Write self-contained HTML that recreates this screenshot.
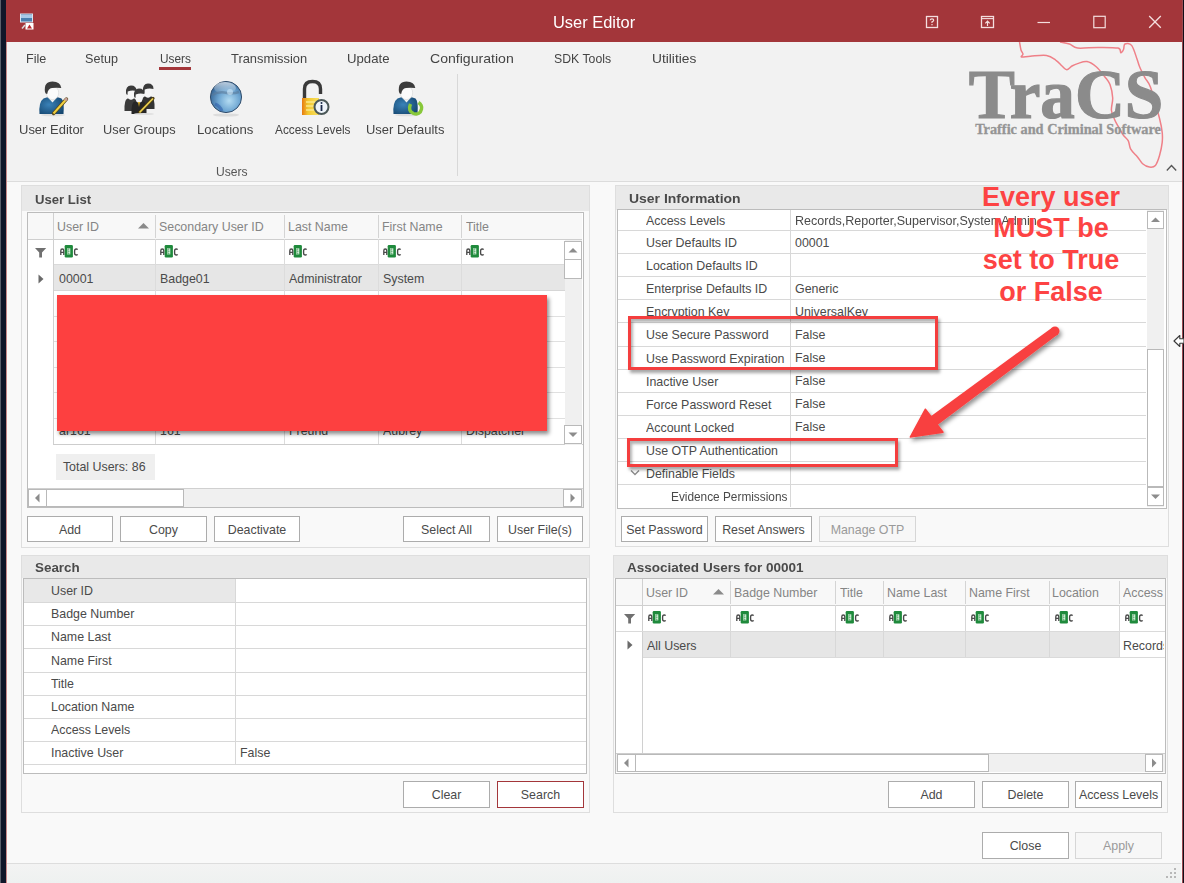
<!DOCTYPE html><html><head><meta charset="utf-8"><style>
html,body{margin:0;padding:0;}
body{width:1184px;height:883px;position:relative;overflow:hidden;background:#f9f9f9;font-family:"Liberation Sans",sans-serif;font-size:12.4px;color:#4a4a4a;}
div,svg{position:absolute;box-sizing:content-box;}
.t{white-space:nowrap;overflow:hidden;}
</style></head><body>
<div style="left:0px;top:0px;width:6px;height:883px;background:#0f1629"></div>
<div style="left:0px;top:0px;width:1px;height:883px;background:#5a5f6a"></div>
<div style="left:6px;top:0px;width:1px;height:883px;background:#c98a8a"></div>
<div style="left:1182px;top:0px;width:2px;height:883px;background:#120d18"></div>
<div style="left:1182px;top:0px;width:1px;height:883px;background:#9c4a50"></div>
<div style="left:6px;top:0px;width:1176px;height:42px;background:#a3363a"></div>
<svg style="left:19px;top:13px" width="18" height="18" viewBox="0 0 18 18"><rect x="1.5" y="1" width="12" height="8" fill="#4a7fae" stroke="#d9e6f2" stroke-width="1"/><rect x="2" y="2" width="11" height="3" fill="#a9c9e6"/><rect x="6.5" y="10" width="8" height="6.5" fill="#fff"/><path d="M8 15.5L10.5 11.5L13 15.5Z" fill="#b8282e"/><path d="M3 15.5L6 12" stroke="#ddd" stroke-width="1.5"/></svg>
<div class="t" style="left:552.7px;top:1.5px;width:82.0px;height:42px;line-height:42px;font-size:16px;transform:scaleX(1.0259);transform-origin:0 0;color:#fff;">User Editor</div>
<svg style="left:925px;top:15px" width="14" height="14" viewBox="0 0 14 14"><rect x="1.5" y="1.5" width="11" height="11" fill="none" stroke="#f4dede" stroke-width="1.3"/><path d="M5.2 5.2Q5.3 3.8 7 3.8Q8.7 3.8 8.7 5.2Q8.7 6.3 7 6.8V8" stroke="#f4dede" stroke-width="1.2" fill="none"/><rect x="6.4" y="9" width="1.2" height="1.3" fill="#f4dede"/></svg>
<svg style="left:980px;top:15px" width="16" height="14" viewBox="0 0 16 14"><rect x="1.5" y="1.5" width="12" height="11" fill="none" stroke="#f4dede" stroke-width="1.3"/><path d="M1.5 3.6H13.5" stroke="#f4dede" stroke-width="1.1"/><path d="M7.5 11V6.5M5.3 8.4L7.5 6.2L9.7 8.4" stroke="#f4dede" stroke-width="1.2" fill="none"/></svg>
<svg style="left:1036px;top:15px" width="16" height="14" viewBox="0 0 16 14"><path d="M1.5 7.5H14" stroke="#f4dede" stroke-width="1.2"/></svg>
<svg style="left:1092px;top:15px" width="16" height="14" viewBox="0 0 16 14"><rect x="1.8" y="1.3" width="11.4" height="11.4" fill="none" stroke="#f4dede" stroke-width="1.2"/></svg>
<svg style="left:1148px;top:15px" width="16" height="14" viewBox="0 0 16 14"><path d="M1.2 1L12.8 12.8M12.8 1L1.2 12.8" stroke="#f4dede" stroke-width="1.3"/></svg>
<div style="left:7px;top:42px;width:1175px;height:139px;background:#f2f2f2"></div>
<div style="left:7px;top:181px;width:1175px;height:1px;background:#dcdcdc"></div>
<div class="t" style="left:25.5px;top:48.5px;width:22.3px;height:20px;line-height:20px;font-size:12.6px;transform:scaleX(0.9998);transform-origin:0 0;color:#444;">File</div>
<div class="t" style="left:85.2px;top:48.5px;width:34.9px;height:20px;line-height:20px;font-size:12.6px;transform:scaleX(0.9991);transform-origin:0 0;color:#444;">Setup</div>
<div class="t" style="left:159.5px;top:48.5px;width:34.9px;height:20px;line-height:20px;font-size:12.6px;transform:scaleX(0.9391);transform-origin:0 0;color:#444;">Users</div>
<div class="t" style="left:230.7px;top:48.5px;width:76.5px;height:20px;line-height:20px;font-size:12.6px;transform:scaleX(1.0221);transform-origin:0 0;color:#444;">Transmission</div>
<div class="t" style="left:347px;top:48.5px;width:42.6px;height:20px;line-height:20px;font-size:12.6px;transform:scaleX(1.0460);transform-origin:0 0;color:#444;">Update</div>
<div class="t" style="left:430.4px;top:48.5px;width:77.0px;height:20px;line-height:20px;font-size:12.6px;transform:scaleX(1.1181);transform-origin:0 0;color:#444;">Configuration</div>
<div class="t" style="left:554.4px;top:48.5px;width:60.6px;height:20px;line-height:20px;font-size:12.6px;transform:scaleX(0.9745);transform-origin:0 0;color:#444;">SDK Tools</div>
<div class="t" style="left:651.7px;top:48.5px;width:42.6px;height:20px;line-height:20px;font-size:12.6px;transform:scaleX(1.0910);transform-origin:0 0;color:#444;">Utilities</div>
<div style="left:159px;top:67px;width:32px;height:3px;background:#a3363a"></div>
<svg style="left:960px;top:42px" width="222" height="130" viewBox="960 42 222 130"><path d="M1019.5 42.0C1019.8 43.3 1020.4 48.0 1021.0 50.0C1021.6 52.0 1022.9 52.8 1023.0 54.0C1023.1 55.2 1020.3 56.6 1021.5 57.0C1022.7 57.4 1026.1 56.5 1030.3 56.2C1034.5 56.0 1042.2 54.8 1046.5 55.5C1050.8 56.2 1053.4 58.5 1056.0 60.3C1058.6 62.0 1060.2 64.4 1062.0 66.0C1063.8 67.6 1065.1 69.7 1066.8 69.7C1068.5 69.7 1070.2 67.0 1072.0 66.0C1073.8 65.0 1075.1 64.3 1077.6 63.6C1080.1 62.9 1083.8 61.0 1087.0 61.6C1090.2 62.2 1093.6 64.5 1096.5 67.0C1099.4 69.5 1102.3 73.6 1104.6 76.5C1106.8 79.4 1108.7 81.0 1110.0 84.6C1111.3 88.2 1112.5 93.7 1112.7 98.0C1112.9 102.3 1111.1 106.7 1111.4 110.3C1111.7 113.9 1113.6 117.1 1114.6 119.5C1115.6 121.9 1115.8 122.0 1117.2 124.6C1118.6 127.1 1121.3 132.1 1123.1 134.8C1124.9 137.5 1126.9 138.3 1128.2 140.7C1129.5 143.1 1129.2 146.5 1130.7 149.2C1132.2 151.9 1135.5 154.5 1137.5 156.9C1139.5 159.3 1140.6 162.0 1142.6 163.7C1144.6 165.4 1147.3 166.7 1149.4 167.0C1151.5 167.3 1153.7 167.4 1155.4 165.4C1157.1 163.4 1158.5 159.0 1159.6 155.2C1160.7 151.4 1161.8 146.2 1162.2 142.4C1162.6 138.6 1162.6 136.2 1162.2 132.3C1161.8 128.4 1161.5 126.2 1159.6 118.7C1157.6 111.2 1152.9 94.1 1150.5 87.3C1148.1 80.5 1146.8 81.2 1145.0 77.8C1143.2 74.4 1141.0 70.1 1139.7 67.0C1138.4 63.9 1138.3 62.6 1137.0 59.0C1135.7 55.4 1133.6 47.9 1131.6 45.4C1129.6 42.9 1126.2 43.3 1124.9 44.0C1123.6 44.7 1124.2 48.0 1123.5 49.5C1122.8 51.0 1121.7 53.0 1120.8 52.8C1119.9 52.6 1121.8 49.0 1118.0 48.1C1114.2 47.2 1104.5 47.4 1097.8 47.4C1091.1 47.4 1082.3 48.7 1077.6 48.1C1072.9 47.5 1072.4 45.0 1069.5 44.0C1066.6 43.0 1061.6 42.3 1060.0 42.0" fill="none" stroke="#ef8088" stroke-width="1.5" stroke-linejoin="round"/></svg>
<div class="t" style="left:964px;top:57px;width:204px;height:76px;line-height:76px;text-align:center;font-family:'Liberation Serif',serif;font-weight:bold;font-size:70px;color:#8b8b8b;-webkit-text-stroke:1.2px #8b8b8b;transform:scaleX(0.988);transform-origin:50% 50%;">TraCS</div>
<div class="t" style="left:961px;top:118px;width:214px;height:22px;line-height:22px;text-align:center;font-family:'Liberation Serif',serif;font-weight:bold;font-size:14.3px;color:#959595;-webkit-text-stroke:0.3px #959595;">Traffic and Criminal Software</div>
<svg style="left:1164px;top:162px" width="14" height="10" viewBox="0 0 14 10"><path d="M2.8 8.5L7.5 3.5L12.2 8.5" stroke="#555" stroke-width="1.3" fill="none"/></svg>
<svg style="left:37px;top:80px" width="32" height="37" viewBox="0 0 32 37"><defs><radialGradient id="bd37" cx="0.4" cy="0.45" r="0.7"><stop offset="0" stop-color="#3a82b8"/><stop offset="1" stop-color="#15466f"/></radialGradient></defs><ellipse cx="16" cy="35" rx="12" ry="1.3" fill="#dedede"/><path d="M2.5 34Q1.5 22 6.5 18.5Q9.5 17 12.5 17H18.5Q21.5 17 24.5 18.5Q27.5 21 26.5 34Z" fill="url(#bd37)"/><path d="M10.5 17L15.5 22.5L20.5 17Z" fill="#f2f2f2"/><ellipse cx="15.5" cy="12.8" rx="6.2" ry="6.8" fill="#fbfbfb" stroke="#cfcfcf" stroke-width="0.5"/><path d="M8 12Q6.5 1.5 15.5 1.5Q23.5 1.5 24.3 8Q19.5 7.3 15 8Q11 8.5 10.2 14Q8.3 13.8 8 12Z" fill="#3c3c3c"/></svg>
<svg style="left:51px;top:96px" width="18" height="20" viewBox="0 0 18 20"><path d="M2.5 17.5L15.5 3" stroke="#5a4a1a" stroke-width="3.4" stroke-linecap="round"/><path d="M2.5 17.5L15.5 3" stroke="#f0d040" stroke-width="2"/><path d="M14 4.5L16 2.3" stroke="#c9a0a0" stroke-width="2.4"/></svg>
<svg style="left:122px;top:83px" width="40" height="32" viewBox="0 0 40 32"><path d="M2.5 28Q2.0 17 5.5 15.5H12.5Q16.0 17 15.5 28Z" fill="#3b3b3b"/><ellipse cx="9" cy="11.5" rx="3.6" ry="5.2" fill="#f6f6f6"/><path d="M4 10Q3.5 2.5 9 2.5Q14.5 2.5 14.5 8Q10 6.8 5.7 8.5L5.5 12Q4 11.5 4 10Z" fill="#3a3a3a"/><path d="M19.5 26Q19.0 15 22.5 13.5H29.5Q33.0 15 32.5 26Z" fill="#333"/><ellipse cx="26" cy="9.5" rx="3.6" ry="5.2" fill="#f6f6f6"/><path d="M21 8Q20.5 0.5 26 0.5Q31.5 0.5 31.5 6Q27 4.8 22.7 6.5L22.5 10Q21 9.5 21 8Z" fill="#3a3a3a"/><path d="M9.5 31Q9.0 20 12.5 18.5H21.5Q25.0 20 24.5 31Z" fill="#262626"/><ellipse cx="17" cy="14.5" rx="3.6" ry="5.2" fill="#f6f6f6"/><path d="M12 13Q11.5 5.5 17 5.5Q22.5 5.5 22.5 11Q18 9.8 13.7 11.5L13.5 15Q12 14.5 12 13Z" fill="#3a3a3a"/><path d="M16 19L17 24L18 19Z" fill="#e0b020"/><path d="M17.5 29.5L31 15.5" stroke="#4a3a10" stroke-width="3.2" stroke-linecap="round"/><path d="M17.5 29.5L31 15.5" stroke="#ead050" stroke-width="1.8"/><ellipse cx="22" cy="31" rx="10" ry="1" fill="#dedede"/></svg>
<svg style="left:208px;top:79px" width="36" height="38" viewBox="0 0 36 38"><defs><radialGradient id="gl" cx="0.6" cy="0.62" r="0.62"><stop offset="0" stop-color="#b4dcf2"/><stop offset="0.55" stop-color="#6ea6d2"/><stop offset="1" stop-color="#3a6a9a"/></radialGradient><linearGradient id="gh" x1="0" y1="0" x2="0" y2="1"><stop offset="0" stop-color="#fff" stop-opacity="0.65"/><stop offset="1" stop-color="#fff" stop-opacity="0"/></linearGradient></defs><ellipse cx="18" cy="36" rx="13" ry="1.6" fill="#dcdcdc"/><circle cx="18" cy="18" r="15.6" fill="url(#gl)" stroke="#34506e" stroke-width="1"/><ellipse cx="17" cy="9" rx="11" ry="6" fill="url(#gh)"/><path d="M4 16Q11 12 19 14Q26 15 31 13" stroke="#5a7a9a" stroke-width="2.5" fill="none" opacity="0.6"/><path d="M7 25Q12 27 14 32" stroke="#2a5aa8" stroke-width="3" fill="none" opacity="0.55"/><circle cx="22" cy="13" r="3" fill="#cfe8f8" opacity="0.6"/></svg>
<svg style="left:297px;top:78px" width="34" height="38" viewBox="0 0 34 38"><path d="M7.5 21V11Q7.5 3.5 15.5 3.5Q23.5 3.5 23.5 11V16" stroke="#3a3a3a" stroke-width="3.4" fill="none"/><defs><linearGradient id="lk" x1="0" y1="0" x2="1" y2="0"><stop offset="0" stop-color="#e87a10"/><stop offset="0.35" stop-color="#f2c830"/><stop offset="1" stop-color="#f8e060"/></linearGradient></defs><rect x="5" y="20" width="17" height="17" fill="url(#lk)"/><path d="M9 24H21M9 28H21M9 32H21" stroke="#fbe888" stroke-width="1.3"/><circle cx="24.5" cy="29" r="7" fill="#eef4fa" stroke="#4b5858" stroke-width="2"/><path d="M24.5 27V33" stroke="#1a2a4a" stroke-width="1.8"/><circle cx="24.5" cy="25" r="1" fill="#1a2a4a"/></svg>
<svg style="left:391px;top:80px" width="32" height="37" viewBox="0 0 32 37"><defs><radialGradient id="bd391" cx="0.4" cy="0.45" r="0.7"><stop offset="0" stop-color="#3a82b8"/><stop offset="1" stop-color="#15466f"/></radialGradient></defs><ellipse cx="16" cy="35" rx="12" ry="1.3" fill="#dedede"/><path d="M2.5 34Q1.5 22 6.5 18.5Q9.5 17 12.5 17H18.5Q21.5 17 24.5 18.5Q27.5 21 26.5 34Z" fill="url(#bd391)"/><path d="M10.5 17L15.5 22.5L20.5 17Z" fill="#f2f2f2"/><ellipse cx="15.5" cy="12.8" rx="6.2" ry="6.8" fill="#fbfbfb" stroke="#cfcfcf" stroke-width="0.5"/><path d="M8 12Q6.5 1.5 15.5 1.5Q23.5 1.5 24.3 8Q19.5 7.3 15 8Q11 8.5 10.2 14Q8.3 13.8 8 12Z" fill="#3c3c3c"/></svg>
<svg style="left:405px;top:98px" width="20" height="19" viewBox="0 0 20 19"><path d="M5.5 6Q2.5 13 8.5 15.5Q15 17.5 16.5 11Q17.3 7 13.5 4.5" stroke="#88c83a" stroke-width="3.4" fill="none"/></svg>
<div class="t" style="left:19.3px;top:120px;width:63.0px;height:20px;line-height:20px;font-size:12.2px;transform:scaleX(1.0652);transform-origin:0 0;color:#444;">User Editor</div>
<div class="t" style="left:102.6px;top:120px;width:71.2px;height:20px;line-height:20px;font-size:12.2px;transform:scaleX(1.0498);transform-origin:0 0;color:#444;">User Groups</div>
<div class="t" style="left:197px;top:120px;width:54.2px;height:20px;line-height:20px;font-size:12.2px;transform:scaleX(1.0799);transform-origin:0 0;color:#444;">Locations</div>
<div class="t" style="left:274.7px;top:120px;width:80.0px;height:20px;line-height:20px;font-size:12.2px;transform:scaleX(0.9695);transform-origin:0 0;color:#444;">Access Levels</div>
<div class="t" style="left:365.5px;top:120px;width:75.9px;height:20px;line-height:20px;font-size:12.2px;transform:scaleX(1.0622);transform-origin:0 0;color:#444;">User Defaults</div>
<div class="t" style="left:216px;top:162px;width:33.9px;height:20px;line-height:20px;font-size:12.2px;transform:scaleX(0.9919);transform-origin:0 0;color:#555;">Users</div>
<div style="left:457px;top:74px;width:1px;height:102px;background:#d8d8d8"></div>
<div style="left:21px;top:185px;width:567px;height:361px;border:1px solid #dedede;background:#f9f9f9"></div>
<div style="left:22px;top:186px;width:567px;height:25px;background:#e9e9e9"></div>
<div class="t" style="left:35.1px;top:187px;width:57.6px;height:25px;line-height:25px;font-size:13px;font-weight:bold;transform:scaleX(1.0084);transform-origin:0 0;color:#4a4a4a;">User List</div>
<div style="left:27px;top:212px;width:555px;height:294px;border:1px solid #bcbcbc;background:#fff"></div>
<div style="left:28px;top:213px;width:554px;height:26px;background:#f8f8f8"></div>
<div style="left:28px;top:239px;width:554px;height:1px;background:#cfcfcf"></div>
<div style="left:155px;top:215px;width:1px;height:23px;background:#d4d4d4"></div>
<div style="left:284px;top:215px;width:1px;height:23px;background:#d4d4d4"></div>
<div style="left:378px;top:215px;width:1px;height:23px;background:#d4d4d4"></div>
<div style="left:461px;top:215px;width:1px;height:23px;background:#d4d4d4"></div>
<div style="left:53px;top:213px;width:1px;height:232px;background:#d0d0d0"></div>
<div class="t" style="left:57px;top:214px;width:120px;height:26px;line-height:26px;text-align:left;color:#858585;">User ID</div>
<div class="t" style="left:159px;top:214px;width:120px;height:26px;line-height:26px;text-align:left;color:#858585;">Secondary User ID</div>
<div class="t" style="left:288px;top:214px;width:120px;height:26px;line-height:26px;text-align:left;color:#858585;">Last Name</div>
<div class="t" style="left:382px;top:214px;width:120px;height:26px;line-height:26px;text-align:left;color:#858585;">First Name</div>
<div class="t" style="left:466px;top:214px;width:120px;height:26px;line-height:26px;text-align:left;color:#858585;">Title</div>
<svg style="left:138px;top:223px" width="11" height="6" viewBox="0 0 11 6"><path d="M0 5.5L5.5 0L11 5.5Z" fill="#8a8a8a"/></svg>
<div style="left:54px;top:264px;width:511px;height:1px;background:#dadada"></div>
<svg style="left:35px;top:248px" width="12" height="10" viewBox="0 0 12 10"><path d="M0 0H11.2L7 4.5V9.5H4.2V4.5Z" fill="#707070"/></svg>
<svg style="left:60px;top:245px" width="20" height="14" viewBox="0 0 20 14"><path d="M0.8 10V5.8Q0.8 4 2.3 4Q3.8 4 3.8 5.8V10M0.8 7.3h3" stroke="#4a4a4a" stroke-width="1.35" fill="none"/><rect x="4.7" y="0" width="8.2" height="12.4" rx="1.2" fill="#1f8a3c"/><rect x="7" y="3.3" width="3.3" height="6.1" fill="#d8f0dc"/><path d="M7.9 3.8V9M7.9 4.1H9.3M7.9 6.3H9.5M7.9 8.7H9.5" stroke="#3f9a55" stroke-width="0.7" fill="none"/><path d="M17.6 4.6Q17.2 4 16.2 4Q14.6 4 14.6 6V8Q14.6 10 16.2 10Q17.2 10 17.6 9.4" stroke="#4a4a4a" stroke-width="1.35" fill="none"/></svg>
<svg style="left:160px;top:245px" width="20" height="14" viewBox="0 0 20 14"><path d="M0.8 10V5.8Q0.8 4 2.3 4Q3.8 4 3.8 5.8V10M0.8 7.3h3" stroke="#4a4a4a" stroke-width="1.35" fill="none"/><rect x="4.7" y="0" width="8.2" height="12.4" rx="1.2" fill="#1f8a3c"/><rect x="7" y="3.3" width="3.3" height="6.1" fill="#d8f0dc"/><path d="M7.9 3.8V9M7.9 4.1H9.3M7.9 6.3H9.5M7.9 8.7H9.5" stroke="#3f9a55" stroke-width="0.7" fill="none"/><path d="M17.6 4.6Q17.2 4 16.2 4Q14.6 4 14.6 6V8Q14.6 10 16.2 10Q17.2 10 17.6 9.4" stroke="#4a4a4a" stroke-width="1.35" fill="none"/></svg>
<svg style="left:289px;top:245px" width="20" height="14" viewBox="0 0 20 14"><path d="M0.8 10V5.8Q0.8 4 2.3 4Q3.8 4 3.8 5.8V10M0.8 7.3h3" stroke="#4a4a4a" stroke-width="1.35" fill="none"/><rect x="4.7" y="0" width="8.2" height="12.4" rx="1.2" fill="#1f8a3c"/><rect x="7" y="3.3" width="3.3" height="6.1" fill="#d8f0dc"/><path d="M7.9 3.8V9M7.9 4.1H9.3M7.9 6.3H9.5M7.9 8.7H9.5" stroke="#3f9a55" stroke-width="0.7" fill="none"/><path d="M17.6 4.6Q17.2 4 16.2 4Q14.6 4 14.6 6V8Q14.6 10 16.2 10Q17.2 10 17.6 9.4" stroke="#4a4a4a" stroke-width="1.35" fill="none"/></svg>
<svg style="left:383px;top:245px" width="20" height="14" viewBox="0 0 20 14"><path d="M0.8 10V5.8Q0.8 4 2.3 4Q3.8 4 3.8 5.8V10M0.8 7.3h3" stroke="#4a4a4a" stroke-width="1.35" fill="none"/><rect x="4.7" y="0" width="8.2" height="12.4" rx="1.2" fill="#1f8a3c"/><rect x="7" y="3.3" width="3.3" height="6.1" fill="#d8f0dc"/><path d="M7.9 3.8V9M7.9 4.1H9.3M7.9 6.3H9.5M7.9 8.7H9.5" stroke="#3f9a55" stroke-width="0.7" fill="none"/><path d="M17.6 4.6Q17.2 4 16.2 4Q14.6 4 14.6 6V8Q14.6 10 16.2 10Q17.2 10 17.6 9.4" stroke="#4a4a4a" stroke-width="1.35" fill="none"/></svg>
<svg style="left:466px;top:245px" width="20" height="14" viewBox="0 0 20 14"><path d="M0.8 10V5.8Q0.8 4 2.3 4Q3.8 4 3.8 5.8V10M0.8 7.3h3" stroke="#4a4a4a" stroke-width="1.35" fill="none"/><rect x="4.7" y="0" width="8.2" height="12.4" rx="1.2" fill="#1f8a3c"/><rect x="7" y="3.3" width="3.3" height="6.1" fill="#d8f0dc"/><path d="M7.9 3.8V9M7.9 4.1H9.3M7.9 6.3H9.5M7.9 8.7H9.5" stroke="#3f9a55" stroke-width="0.7" fill="none"/><path d="M17.6 4.6Q17.2 4 16.2 4Q14.6 4 14.6 6V8Q14.6 10 16.2 10Q17.2 10 17.6 9.4" stroke="#4a4a4a" stroke-width="1.35" fill="none"/></svg>
<div style="left:54px;top:265px;width:511px;height:26px;background:#e6e6e6"></div>
<div style="left:54px;top:290px;width:511px;height:1px;background:#d6d6d6"></div>
<div style="left:155px;top:239px;width:1px;height:206px;background:#dcdcdc"></div>
<div style="left:284px;top:239px;width:1px;height:206px;background:#dcdcdc"></div>
<div style="left:378px;top:239px;width:1px;height:206px;background:#dcdcdc"></div>
<div style="left:461px;top:239px;width:1px;height:206px;background:#dcdcdc"></div>
<svg style="left:38px;top:274px" width="6" height="10" viewBox="0 0 6 10"><path d="M0.5 0.5L5.5 5L0.5 9.5Z" fill="#6a6a6a"/></svg>
<div class="t" style="left:59px;top:267px;width:120px;height:25px;line-height:25px;text-align:left;">00001</div>
<div class="t" style="left:160px;top:267px;width:120px;height:25px;line-height:25px;text-align:left;">Badge01</div>
<div class="t" style="left:289px;top:267px;width:120px;height:25px;line-height:25px;text-align:left;">Administrator</div>
<div class="t" style="left:383px;top:267px;width:120px;height:25px;line-height:25px;text-align:left;">System</div>
<div style="left:54px;top:316px;width:511px;height:1px;background:#e0e0e0"></div>
<div style="left:54px;top:341px;width:511px;height:1px;background:#e0e0e0"></div>
<div style="left:54px;top:367px;width:511px;height:1px;background:#e0e0e0"></div>
<div style="left:54px;top:392px;width:511px;height:1px;background:#e0e0e0"></div>
<div style="left:54px;top:418px;width:511px;height:1px;background:#e0e0e0"></div>
<div style="left:54px;top:444px;width:511px;height:1px;background:#e0e0e0"></div>
<div class="t" style="left:59px;top:419px;width:120px;height:25px;line-height:25px;text-align:left;">ar161</div>
<div class="t" style="left:160px;top:419px;width:120px;height:25px;line-height:25px;text-align:left;">161</div>
<div class="t" style="left:289px;top:419px;width:120px;height:25px;line-height:25px;text-align:left;">Freund</div>
<div class="t" style="left:383px;top:419px;width:120px;height:25px;line-height:25px;text-align:left;">Aubrey</div>
<div class="t" style="left:466px;top:419px;width:120px;height:25px;line-height:25px;text-align:left;">Dispatcher</div>
<div style="left:53px;top:444px;width:530px;height:1px;background:#cdcdcd"></div>
<div style="left:565px;top:240px;width:17px;height:205px;background:#f0f0f0"></div>
<div style="left:564px;top:241px;width:16px;height:17px;border:1px solid #b9b9b9;background:#fff"></div>
<svg style="left:0;top:0" width="1184" height="883"><path d="M568.5 252.5L573.0 248.0L577.5 252.5Z" fill="#8c8c8c"/></svg>
<div style="left:564px;top:259px;width:16px;height:18px;border:1px solid #b9b9b9;background:#fff"></div>
<div style="left:564px;top:425px;width:16px;height:17px;border:1px solid #b9b9b9;background:#fff"></div>
<svg style="left:0;top:0" width="1184" height="883"><path d="M568.5 432.5L573.0 437.0L577.5 432.5Z" fill="#8c8c8c"/></svg>
<div class="t" style="left:56px;top:454px;width:99px;height:26px;line-height:26px;text-align:left;background:#efefef;">&nbsp;&nbsp;Total Users: 86</div>
<div style="left:28px;top:489px;width:555px;height:18px;background:#f0f0f0"></div>
<div style="left:28px;top:488px;width:555px;height:1px;background:#d0d0d0"></div>
<div style="left:28px;top:489px;width:17px;height:16px;border:1px solid #b9b9b9;background:#fff"></div>
<svg style="left:0;top:0" width="1184" height="883"><path d="M39.5 493.5L35.0 498.0L39.5 502.5Z" fill="#8c8c8c"/></svg>
<div style="left:46px;top:489px;width:136px;height:16px;border:1px solid #b9b9b9;background:#fff"></div>
<div style="left:563px;top:489px;width:17px;height:16px;border:1px solid #b9b9b9;background:#fff"></div>
<svg style="left:0;top:0" width="1184" height="883"><path d="M570.5 493.5L575.0 498.0L570.5 502.5Z" fill="#8c8c8c"/></svg>
<div style="left:57px;top:295px;width:490px;height:136px;background:#fd4040;box-shadow:2px 3px 4px rgba(0,0,0,0.45)"></div>
<div class="t" style="left:27px;top:516px;width:84px;height:24px;line-height:26px;text-align:center;border:1px solid #acacac;background:#ffffff;color:#4a4a4a">Add</div>
<div class="t" style="left:120px;top:516px;width:85px;height:24px;line-height:26px;text-align:center;border:1px solid #acacac;background:#ffffff;color:#4a4a4a">Copy</div>
<div class="t" style="left:214px;top:516px;width:84px;height:24px;line-height:26px;text-align:center;border:1px solid #acacac;background:#ffffff;color:#4a4a4a">Deactivate</div>
<div class="t" style="left:403px;top:516px;width:85px;height:24px;line-height:26px;text-align:center;border:1px solid #acacac;background:#ffffff;color:#4a4a4a">Select All</div>
<div class="t" style="left:497px;top:516px;width:84px;height:24px;line-height:26px;text-align:center;border:1px solid #acacac;background:#ffffff;color:#4a4a4a">User File(s)</div>
<div style="left:21px;top:555px;width:567px;height:256px;border:1px solid #dedede;background:#f9f9f9"></div>
<div style="left:22px;top:556px;width:567px;height:22px;background:#e9e9e9"></div>
<div class="t" style="left:34.7px;top:557px;width:45.4px;height:22px;line-height:22px;font-size:13px;font-weight:bold;transform:scaleX(1.0309);transform-origin:0 0;color:#4a4a4a;">Search</div>
<div style="left:23px;top:578px;width:562px;height:194px;border:1px solid #bcbcbc;background:#fff"></div>
<div style="left:24px;top:579px;width:211px;height:23px;background:#e8e8e8"></div>
<div class="t" style="left:51px;top:580px;width:180px;height:23px;line-height:23px;text-align:left;">User ID</div>
<div style="left:24px;top:602px;width:562px;height:1px;background:#d8d8d8"></div>
<div class="t" style="left:51px;top:603px;width:180px;height:23px;line-height:23px;text-align:left;">Badge Number</div>
<div style="left:24px;top:625px;width:562px;height:1px;background:#d8d8d8"></div>
<div class="t" style="left:51px;top:626px;width:180px;height:23px;line-height:23px;text-align:left;">Name Last</div>
<div style="left:24px;top:648px;width:562px;height:1px;background:#d8d8d8"></div>
<div class="t" style="left:51px;top:649px;width:180px;height:24px;line-height:24px;text-align:left;">Name First</div>
<div style="left:24px;top:672px;width:562px;height:1px;background:#d8d8d8"></div>
<div class="t" style="left:51px;top:673px;width:180px;height:23px;line-height:23px;text-align:left;">Title</div>
<div style="left:24px;top:695px;width:562px;height:1px;background:#d8d8d8"></div>
<div class="t" style="left:51px;top:696px;width:180px;height:23px;line-height:23px;text-align:left;">Location Name</div>
<div style="left:24px;top:718px;width:562px;height:1px;background:#d8d8d8"></div>
<div class="t" style="left:51px;top:719px;width:180px;height:23px;line-height:23px;text-align:left;">Access Levels</div>
<div style="left:24px;top:741px;width:562px;height:1px;background:#d8d8d8"></div>
<div class="t" style="left:51px;top:742px;width:180px;height:23px;line-height:23px;text-align:left;">Inactive User</div>
<div style="left:24px;top:764px;width:562px;height:1px;background:#d8d8d8"></div>
<div style="left:235px;top:579px;width:1px;height:185px;background:#d8d8d8"></div>
<div class="t" style="left:240px;top:742px;width:100px;height:23px;line-height:23px;text-align:left;">False</div>
<div class="t" style="left:403px;top:781px;width:85px;height:25px;line-height:27px;text-align:center;border:1px solid #acacac;background:#ffffff;color:#4a4a4a">Clear</div>
<div class="t" style="left:497px;top:781px;width:85px;height:25px;line-height:27px;text-align:center;border:1px solid #a3363a;background:#ffffff;color:#4a4a4a">Search</div>
<div style="left:615px;top:185px;width:552px;height:360px;border:1px solid #dedede;background:#f9f9f9"></div>
<div style="left:616px;top:186px;width:552px;height:24px;background:#e9e9e9"></div>
<div class="t" style="left:629px;top:187px;width:106.0px;height:24px;line-height:24px;font-size:13px;font-weight:bold;transform:scaleX(1.0729);transform-origin:0 0;color:#4a4a4a;">User Information</div>
<div style="left:617px;top:209px;width:548px;height:298px;border:1px solid #bcbcbc;background:#fff"></div>
<div class="t" style="left:646px;top:211px;width:142px;height:21px;line-height:21px;text-align:left;">Access Levels</div>
<div class="t" style="left:795px;top:210.5px;width:241.2px;height:21px;line-height:21px;font-size:12.4px;transform:scaleX(1.0119);transform-origin:0 0;">Records,Reporter,Supervisor,SystemAdmin</div>
<div style="left:618px;top:230px;width:528px;height:1px;background:#d8d8d8"></div>
<div class="t" style="left:646px;top:232px;width:142px;height:23px;line-height:23px;text-align:left;">User Defaults ID</div>
<div class="t" style="left:795px;top:231.5px;width:350px;height:23px;line-height:23px;text-align:left;">00001</div>
<div style="left:618px;top:253px;width:528px;height:1px;background:#d8d8d8"></div>
<div class="t" style="left:646px;top:255px;width:142px;height:23px;line-height:23px;text-align:left;">Location Defaults ID</div>
<div class="t" style="left:795px;top:254.5px;width:350px;height:23px;line-height:23px;text-align:left;"></div>
<div style="left:618px;top:276px;width:528px;height:1px;background:#d8d8d8"></div>
<div class="t" style="left:646px;top:278px;width:142px;height:23px;line-height:23px;text-align:left;">Enterprise Defaults ID</div>
<div class="t" style="left:795px;top:277.5px;width:350px;height:23px;line-height:23px;text-align:left;">Generic</div>
<div style="left:618px;top:299px;width:528px;height:1px;background:#d8d8d8"></div>
<div class="t" style="left:646px;top:301px;width:142px;height:23px;line-height:23px;text-align:left;">Encryption Key</div>
<div class="t" style="left:795px;top:300.5px;width:350px;height:23px;line-height:23px;text-align:left;">UniversalKey</div>
<div style="left:618px;top:322px;width:528px;height:1px;background:#d8d8d8"></div>
<div class="t" style="left:646px;top:324px;width:142px;height:23.5px;line-height:23.5px;text-align:left;">Use Secure Password</div>
<div class="t" style="left:795px;top:323.5px;width:350px;height:23.5px;line-height:23.5px;text-align:left;">False</div>
<div style="left:618px;top:346px;width:528px;height:1px;background:#d8d8d8"></div>
<div class="t" style="left:646px;top:347.5px;width:142px;height:23.100000000000023px;line-height:23.100000000000023px;text-align:left;">Use Password Expiration</div>
<div class="t" style="left:795px;top:347.0px;width:350px;height:23.100000000000023px;line-height:23.100000000000023px;text-align:left;">False</div>
<div style="left:618px;top:369px;width:528px;height:1px;background:#d8d8d8"></div>
<div class="t" style="left:646px;top:370.6px;width:142px;height:23.099999999999966px;line-height:23.099999999999966px;text-align:left;">Inactive User</div>
<div class="t" style="left:795px;top:370.1px;width:350px;height:23.099999999999966px;line-height:23.099999999999966px;text-align:left;">False</div>
<div style="left:618px;top:392px;width:528px;height:1px;background:#d8d8d8"></div>
<div class="t" style="left:646px;top:393.7px;width:142px;height:23.100000000000023px;line-height:23.100000000000023px;text-align:left;">Force Password Reset</div>
<div class="t" style="left:795px;top:393.2px;width:350px;height:23.100000000000023px;line-height:23.100000000000023px;text-align:left;">False</div>
<div style="left:618px;top:415px;width:528px;height:1px;background:#d8d8d8"></div>
<div class="t" style="left:646px;top:416.8px;width:142px;height:23.099999999999966px;line-height:23.099999999999966px;text-align:left;">Account Locked</div>
<div class="t" style="left:795px;top:416.3px;width:350px;height:23.099999999999966px;line-height:23.099999999999966px;text-align:left;">False</div>
<div style="left:618px;top:438px;width:528px;height:1px;background:#d8d8d8"></div>
<div class="t" style="left:646px;top:439.9px;width:142px;height:23.100000000000023px;line-height:23.100000000000023px;text-align:left;">Use OTP Authentication</div>
<div class="t" style="left:795px;top:439.4px;width:350px;height:23.100000000000023px;line-height:23.100000000000023px;text-align:left;"></div>
<div style="left:618px;top:461px;width:528px;height:1px;background:#d8d8d8"></div>
<div class="t" style="left:646px;top:463px;width:142px;height:23.100000000000023px;line-height:23.100000000000023px;text-align:left;">Definable Fields</div>
<div class="t" style="left:795px;top:462.5px;width:350px;height:23.100000000000023px;line-height:23.100000000000023px;text-align:left;"></div>
<div style="left:618px;top:484px;width:528px;height:1px;background:#d8d8d8"></div>
<div class="t" style="left:670.5px;top:486.1px;width:124.0px;height:23.099999999999966px;line-height:23.099999999999966px;font-size:12.4px;transform:scaleX(0.9550);transform-origin:0 0;">Evidence Permissions</div>
<div class="t" style="left:795px;top:485.6px;width:350px;height:23.099999999999966px;line-height:23.099999999999966px;text-align:left;"></div>
<div style="left:790px;top:210px;width:1px;height:297px;background:#d8d8d8"></div>
<svg style="left:630px;top:469px" width="10" height="7" viewBox="0 0 10 7"><path d="M1 1.5L5 5.5L9 1.5" stroke="#8a8a8a" stroke-width="1.3" fill="none"/></svg>
<div style="left:1147px;top:210px;width:17px;height:297px;background:#f0f0f0"></div>
<div style="left:1147px;top:211px;width:15px;height:16px;border:1px solid #b9b9b9;background:#fff"></div>
<svg style="left:0;top:0" width="1184" height="883"><path d="M1151.0 222.0L1155.5 217.5L1160.0 222.0Z" fill="#8c8c8c"/></svg>
<div style="left:1147px;top:349px;width:15px;height:136px;border:1px solid #b9b9b9;background:#fff"></div>
<div style="left:1147px;top:487px;width:15px;height:17px;border:1px solid #b9b9b9;background:#fff"></div>
<svg style="left:0;top:0" width="1184" height="883"><path d="M1151.0 494.5L1155.5 499.0L1160.0 494.5Z" fill="#8c8c8c"/></svg>
<div class="t" style="left:621px;top:516px;width:85px;height:24px;line-height:26px;text-align:center;border:1px solid #acacac;background:#ffffff;color:#4a4a4a">Set Password</div>
<div class="t" style="left:715px;top:516px;width:95px;height:24px;line-height:26px;text-align:center;border:1px solid #acacac;background:#ffffff;color:#4a4a4a">Reset Answers</div>
<div class="t" style="left:819px;top:516px;width:95px;height:24px;line-height:26px;text-align:center;border:1px solid #d6d6d6;background:#f7f7f7;color:#9a9a9a">Manage OTP</div>
<div style="left:613px;top:555px;width:553px;height:256px;border:1px solid #dedede;background:#f9f9f9"></div>
<div style="left:614px;top:556px;width:553px;height:22px;background:#e9e9e9"></div>
<div class="t" style="left:627.4px;top:557px;width:171.8px;height:22px;line-height:22px;font-size:13px;font-weight:bold;transform:scaleX(1.0399);transform-origin:0 0;color:#4a4a4a;">Associated Users for 00001</div>
<div style="left:615px;top:578px;width:549px;height:194px;border:1px solid #bcbcbc;background:#fff"></div>
<div style="left:616px;top:579px;width:549px;height:26px;background:#f8f8f8"></div>
<div style="left:616px;top:605px;width:549px;height:1px;background:#cfcfcf"></div>
<div style="left:642px;top:579px;width:1px;height:174px;background:#d0d0d0"></div>
<div style="left:730px;top:581px;width:1px;height:23px;background:#d4d4d4"></div>
<div style="left:730px;top:605px;width:1px;height:53px;background:#d8d8d8"></div>
<div style="left:835px;top:581px;width:1px;height:23px;background:#d4d4d4"></div>
<div style="left:835px;top:605px;width:1px;height:53px;background:#d8d8d8"></div>
<div style="left:883px;top:581px;width:1px;height:23px;background:#d4d4d4"></div>
<div style="left:883px;top:605px;width:1px;height:53px;background:#d8d8d8"></div>
<div style="left:965px;top:581px;width:1px;height:23px;background:#d4d4d4"></div>
<div style="left:965px;top:605px;width:1px;height:53px;background:#d8d8d8"></div>
<div style="left:1049px;top:581px;width:1px;height:23px;background:#d4d4d4"></div>
<div style="left:1049px;top:605px;width:1px;height:53px;background:#d8d8d8"></div>
<div style="left:1119px;top:581px;width:1px;height:23px;background:#d4d4d4"></div>
<div style="left:1119px;top:605px;width:1px;height:53px;background:#d8d8d8"></div>
<div class="t" style="left:646px;top:580px;width:100px;height:26px;line-height:26px;text-align:left;color:#858585;">User ID</div>
<div class="t" style="left:734px;top:580px;width:100px;height:26px;line-height:26px;text-align:left;color:#858585;">Badge Number</div>
<div class="t" style="left:840px;top:580px;width:100px;height:26px;line-height:26px;text-align:left;color:#858585;">Title</div>
<div class="t" style="left:887px;top:580px;width:100px;height:26px;line-height:26px;text-align:left;color:#858585;">Name Last</div>
<div class="t" style="left:969px;top:580px;width:100px;height:26px;line-height:26px;text-align:left;color:#858585;">Name First</div>
<div class="t" style="left:1052px;top:580px;width:100px;height:26px;line-height:26px;text-align:left;color:#858585;">Location</div>
<div class="t" style="left:1123px;top:580px;width:42px;height:26px;line-height:26px;text-align:left;color:#858585;">Access</div>
<svg style="left:713px;top:589px" width="11" height="6" viewBox="0 0 11 6"><path d="M0 5.5L5.5 0L11 5.5Z" fill="#8a8a8a"/></svg>
<div style="left:616px;top:631px;width:549px;height:1px;background:#dadada"></div>
<svg style="left:624px;top:614px" width="12" height="10" viewBox="0 0 12 10"><path d="M0 0H11.2L7 4.5V9.5H4.2V4.5Z" fill="#707070"/></svg>
<svg style="left:648px;top:611px" width="20" height="14" viewBox="0 0 20 14"><path d="M0.8 10V5.8Q0.8 4 2.3 4Q3.8 4 3.8 5.8V10M0.8 7.3h3" stroke="#4a4a4a" stroke-width="1.35" fill="none"/><rect x="4.7" y="0" width="8.2" height="12.4" rx="1.2" fill="#1f8a3c"/><rect x="7" y="3.3" width="3.3" height="6.1" fill="#d8f0dc"/><path d="M7.9 3.8V9M7.9 4.1H9.3M7.9 6.3H9.5M7.9 8.7H9.5" stroke="#3f9a55" stroke-width="0.7" fill="none"/><path d="M17.6 4.6Q17.2 4 16.2 4Q14.6 4 14.6 6V8Q14.6 10 16.2 10Q17.2 10 17.6 9.4" stroke="#4a4a4a" stroke-width="1.35" fill="none"/></svg>
<svg style="left:736px;top:611px" width="20" height="14" viewBox="0 0 20 14"><path d="M0.8 10V5.8Q0.8 4 2.3 4Q3.8 4 3.8 5.8V10M0.8 7.3h3" stroke="#4a4a4a" stroke-width="1.35" fill="none"/><rect x="4.7" y="0" width="8.2" height="12.4" rx="1.2" fill="#1f8a3c"/><rect x="7" y="3.3" width="3.3" height="6.1" fill="#d8f0dc"/><path d="M7.9 3.8V9M7.9 4.1H9.3M7.9 6.3H9.5M7.9 8.7H9.5" stroke="#3f9a55" stroke-width="0.7" fill="none"/><path d="M17.6 4.6Q17.2 4 16.2 4Q14.6 4 14.6 6V8Q14.6 10 16.2 10Q17.2 10 17.6 9.4" stroke="#4a4a4a" stroke-width="1.35" fill="none"/></svg>
<svg style="left:841px;top:611px" width="20" height="14" viewBox="0 0 20 14"><path d="M0.8 10V5.8Q0.8 4 2.3 4Q3.8 4 3.8 5.8V10M0.8 7.3h3" stroke="#4a4a4a" stroke-width="1.35" fill="none"/><rect x="4.7" y="0" width="8.2" height="12.4" rx="1.2" fill="#1f8a3c"/><rect x="7" y="3.3" width="3.3" height="6.1" fill="#d8f0dc"/><path d="M7.9 3.8V9M7.9 4.1H9.3M7.9 6.3H9.5M7.9 8.7H9.5" stroke="#3f9a55" stroke-width="0.7" fill="none"/><path d="M17.6 4.6Q17.2 4 16.2 4Q14.6 4 14.6 6V8Q14.6 10 16.2 10Q17.2 10 17.6 9.4" stroke="#4a4a4a" stroke-width="1.35" fill="none"/></svg>
<svg style="left:889px;top:611px" width="20" height="14" viewBox="0 0 20 14"><path d="M0.8 10V5.8Q0.8 4 2.3 4Q3.8 4 3.8 5.8V10M0.8 7.3h3" stroke="#4a4a4a" stroke-width="1.35" fill="none"/><rect x="4.7" y="0" width="8.2" height="12.4" rx="1.2" fill="#1f8a3c"/><rect x="7" y="3.3" width="3.3" height="6.1" fill="#d8f0dc"/><path d="M7.9 3.8V9M7.9 4.1H9.3M7.9 6.3H9.5M7.9 8.7H9.5" stroke="#3f9a55" stroke-width="0.7" fill="none"/><path d="M17.6 4.6Q17.2 4 16.2 4Q14.6 4 14.6 6V8Q14.6 10 16.2 10Q17.2 10 17.6 9.4" stroke="#4a4a4a" stroke-width="1.35" fill="none"/></svg>
<svg style="left:971px;top:611px" width="20" height="14" viewBox="0 0 20 14"><path d="M0.8 10V5.8Q0.8 4 2.3 4Q3.8 4 3.8 5.8V10M0.8 7.3h3" stroke="#4a4a4a" stroke-width="1.35" fill="none"/><rect x="4.7" y="0" width="8.2" height="12.4" rx="1.2" fill="#1f8a3c"/><rect x="7" y="3.3" width="3.3" height="6.1" fill="#d8f0dc"/><path d="M7.9 3.8V9M7.9 4.1H9.3M7.9 6.3H9.5M7.9 8.7H9.5" stroke="#3f9a55" stroke-width="0.7" fill="none"/><path d="M17.6 4.6Q17.2 4 16.2 4Q14.6 4 14.6 6V8Q14.6 10 16.2 10Q17.2 10 17.6 9.4" stroke="#4a4a4a" stroke-width="1.35" fill="none"/></svg>
<svg style="left:1054.6px;top:611px" width="20" height="14" viewBox="0 0 20 14"><path d="M0.8 10V5.8Q0.8 4 2.3 4Q3.8 4 3.8 5.8V10M0.8 7.3h3" stroke="#4a4a4a" stroke-width="1.35" fill="none"/><rect x="4.7" y="0" width="8.2" height="12.4" rx="1.2" fill="#1f8a3c"/><rect x="7" y="3.3" width="3.3" height="6.1" fill="#d8f0dc"/><path d="M7.9 3.8V9M7.9 4.1H9.3M7.9 6.3H9.5M7.9 8.7H9.5" stroke="#3f9a55" stroke-width="0.7" fill="none"/><path d="M17.6 4.6Q17.2 4 16.2 4Q14.6 4 14.6 6V8Q14.6 10 16.2 10Q17.2 10 17.6 9.4" stroke="#4a4a4a" stroke-width="1.35" fill="none"/></svg>
<svg style="left:1125.2px;top:611px" width="20" height="14" viewBox="0 0 20 14"><path d="M0.8 10V5.8Q0.8 4 2.3 4Q3.8 4 3.8 5.8V10M0.8 7.3h3" stroke="#4a4a4a" stroke-width="1.35" fill="none"/><rect x="4.7" y="0" width="8.2" height="12.4" rx="1.2" fill="#1f8a3c"/><rect x="7" y="3.3" width="3.3" height="6.1" fill="#d8f0dc"/><path d="M7.9 3.8V9M7.9 4.1H9.3M7.9 6.3H9.5M7.9 8.7H9.5" stroke="#3f9a55" stroke-width="0.7" fill="none"/><path d="M17.6 4.6Q17.2 4 16.2 4Q14.6 4 14.6 6V8Q14.6 10 16.2 10Q17.2 10 17.6 9.4" stroke="#4a4a4a" stroke-width="1.35" fill="none"/></svg>
<div style="left:643px;top:632px;width:476px;height:26px;background:#e6e6e6"></div>
<div style="left:643px;top:657px;width:522px;height:1px;background:#dadada"></div>
<svg style="left:627px;top:640px" width="6" height="10" viewBox="0 0 6 10"><path d="M0.5 0.5L5.5 5L0.5 9.5Z" fill="#6a6a6a"/></svg>
<div style="left:730px;top:632px;width:1px;height:25px;background:#d8d8d8"></div>
<div style="left:835px;top:632px;width:1px;height:25px;background:#d8d8d8"></div>
<div style="left:883px;top:632px;width:1px;height:25px;background:#d8d8d8"></div>
<div style="left:965px;top:632px;width:1px;height:25px;background:#d8d8d8"></div>
<div style="left:1049px;top:632px;width:1px;height:25px;background:#d8d8d8"></div>
<div style="left:1119px;top:632px;width:1px;height:25px;background:#d8d8d8"></div>
<div style="left:1119px;top:632px;width:46px;height:25px;background:#fff"></div>
<div style="left:1119px;top:632px;width:1px;height:25px;background:#d8d8d8"></div>
<div class="t" style="left:647px;top:633.5px;width:80px;height:25px;line-height:25px;text-align:left;">All Users</div>
<div class="t" style="left:1123px;top:633.5px;width:41px;height:25px;line-height:25px;text-align:left;">Records</div>
<div style="left:616px;top:753px;width:549px;height:1px;background:#cdcdcd"></div>
<div style="left:616px;top:754px;width:549px;height:18px;background:#f0f0f0"></div>
<div style="left:617px;top:754px;width:17px;height:16px;border:1px solid #b9b9b9;background:#fff"></div>
<svg style="left:0;top:0" width="1184" height="883"><path d="M628.5 758.5L624.0 763.0L628.5 767.5Z" fill="#8c8c8c"/></svg>
<div style="left:635px;top:754px;width:352px;height:16px;border:1px solid #b9b9b9;background:#fff"></div>
<div style="left:1145px;top:754px;width:16px;height:16px;border:1px solid #b9b9b9;background:#fff"></div>
<svg style="left:0;top:0" width="1184" height="883"><path d="M1152.0 758.5L1156.5 763.0L1152.0 767.5Z" fill="#8c8c8c"/></svg>
<div class="t" style="left:888px;top:781px;width:85px;height:25px;line-height:27px;text-align:center;border:1px solid #acacac;background:#ffffff;color:#4a4a4a">Add</div>
<div class="t" style="left:982px;top:781px;width:85px;height:25px;line-height:27px;text-align:center;border:1px solid #acacac;background:#ffffff;color:#4a4a4a">Delete</div>
<div class="t" style="left:1075px;top:781px;width:85px;height:25px;line-height:27px;text-align:center;border:1px solid #acacac;background:#ffffff;color:#4a4a4a">Access Levels</div>
<div class="t" style="left:982px;top:832px;width:85px;height:25px;line-height:27px;text-align:center;border:1px solid #acacac;background:#ffffff;color:#4a4a4a">Close</div>
<div class="t" style="left:1075px;top:832px;width:85px;height:25px;line-height:27px;text-align:center;border:1px solid #d6d6d6;background:#f7f7f7;color:#9a9a9a">Apply</div>
<div style="left:7px;top:863px;width:1174px;height:1px;background:#dddddd"></div>
<div style="left:7px;top:864px;width:1174px;height:19px;background:linear-gradient(#f3f3f3,#eef1f0)"></div>
<div style="left:1174px;top:868px;width:2px;height:2px;background:#b8b8b8"></div>
<div style="left:1170px;top:872px;width:2px;height:2px;background:#b8b8b8"></div>
<div style="left:1174px;top:872px;width:2px;height:2px;background:#b8b8b8"></div>
<div style="left:1166px;top:876px;width:2px;height:2px;background:#b8b8b8"></div>
<div style="left:1170px;top:876px;width:2px;height:2px;background:#b8b8b8"></div>
<div style="left:1174px;top:876px;width:2px;height:2px;background:#b8b8b8"></div>
<div class="t" style="left:948px;top:180.5px;width:206px;height:32px;line-height:32px;text-align:center;font-weight:bold;font-size:27px;color:#fd4343;">Every user</div>
<div class="t" style="left:948px;top:212.2px;width:206px;height:32px;line-height:32px;text-align:center;font-weight:bold;font-size:27px;color:#fd4343;">MUST be</div>
<div class="t" style="left:948px;top:243.9px;width:206px;height:32px;line-height:32px;text-align:center;font-weight:bold;font-size:27px;color:#fd4343;">set to True</div>
<div class="t" style="left:948px;top:275.6px;width:206px;height:32px;line-height:32px;text-align:center;font-weight:bold;font-size:27px;color:#fd4343;">or False</div>
<div style="left:628px;top:316px;width:304px;height:48px;border:3px solid #f43e3e;box-shadow:2px 3px 3px rgba(0,0,0,0.35),inset 2px 3px 3px rgba(0,0,0,0.3)"></div>
<div style="left:627px;top:438px;width:265px;height:23px;border:3px solid #f43e3e;box-shadow:2px 3px 3px rgba(0,0,0,0.35),inset 2px 3px 3px rgba(0,0,0,0.3)"></div>
<svg style="left:0;top:0" width="1184" height="883"><defs><filter id="sh" x="-20%" y="-20%" width="140%" height="140%"><feDropShadow dx="2" dy="3" stdDeviation="2" flood-color="#000" flood-opacity="0.42"/></filter></defs><g filter="url(#sh)" fill="#f8403f"><path d="M937.5 425.1L930.9 416.3L1052.3 327.4L1057.7 334.6Z"/><circle cx="1055" cy="331" r="4.5"/><path d="M910.3 437L925.4 409.2L943 432.2Z" stroke="#f8403f" stroke-width="1.5" stroke-linejoin="round"/></g></svg>
<svg style="left:1168px;top:330px" width="16" height="22" viewBox="1168 330 16 22"><path d="M1174 341L1179.8 335.5V338.8H1184V343.2H1179.8V346.5Z" fill="#fff" stroke="#3a3a3a" stroke-width="1.1" stroke-linejoin="round"/></svg>
</body></html>
